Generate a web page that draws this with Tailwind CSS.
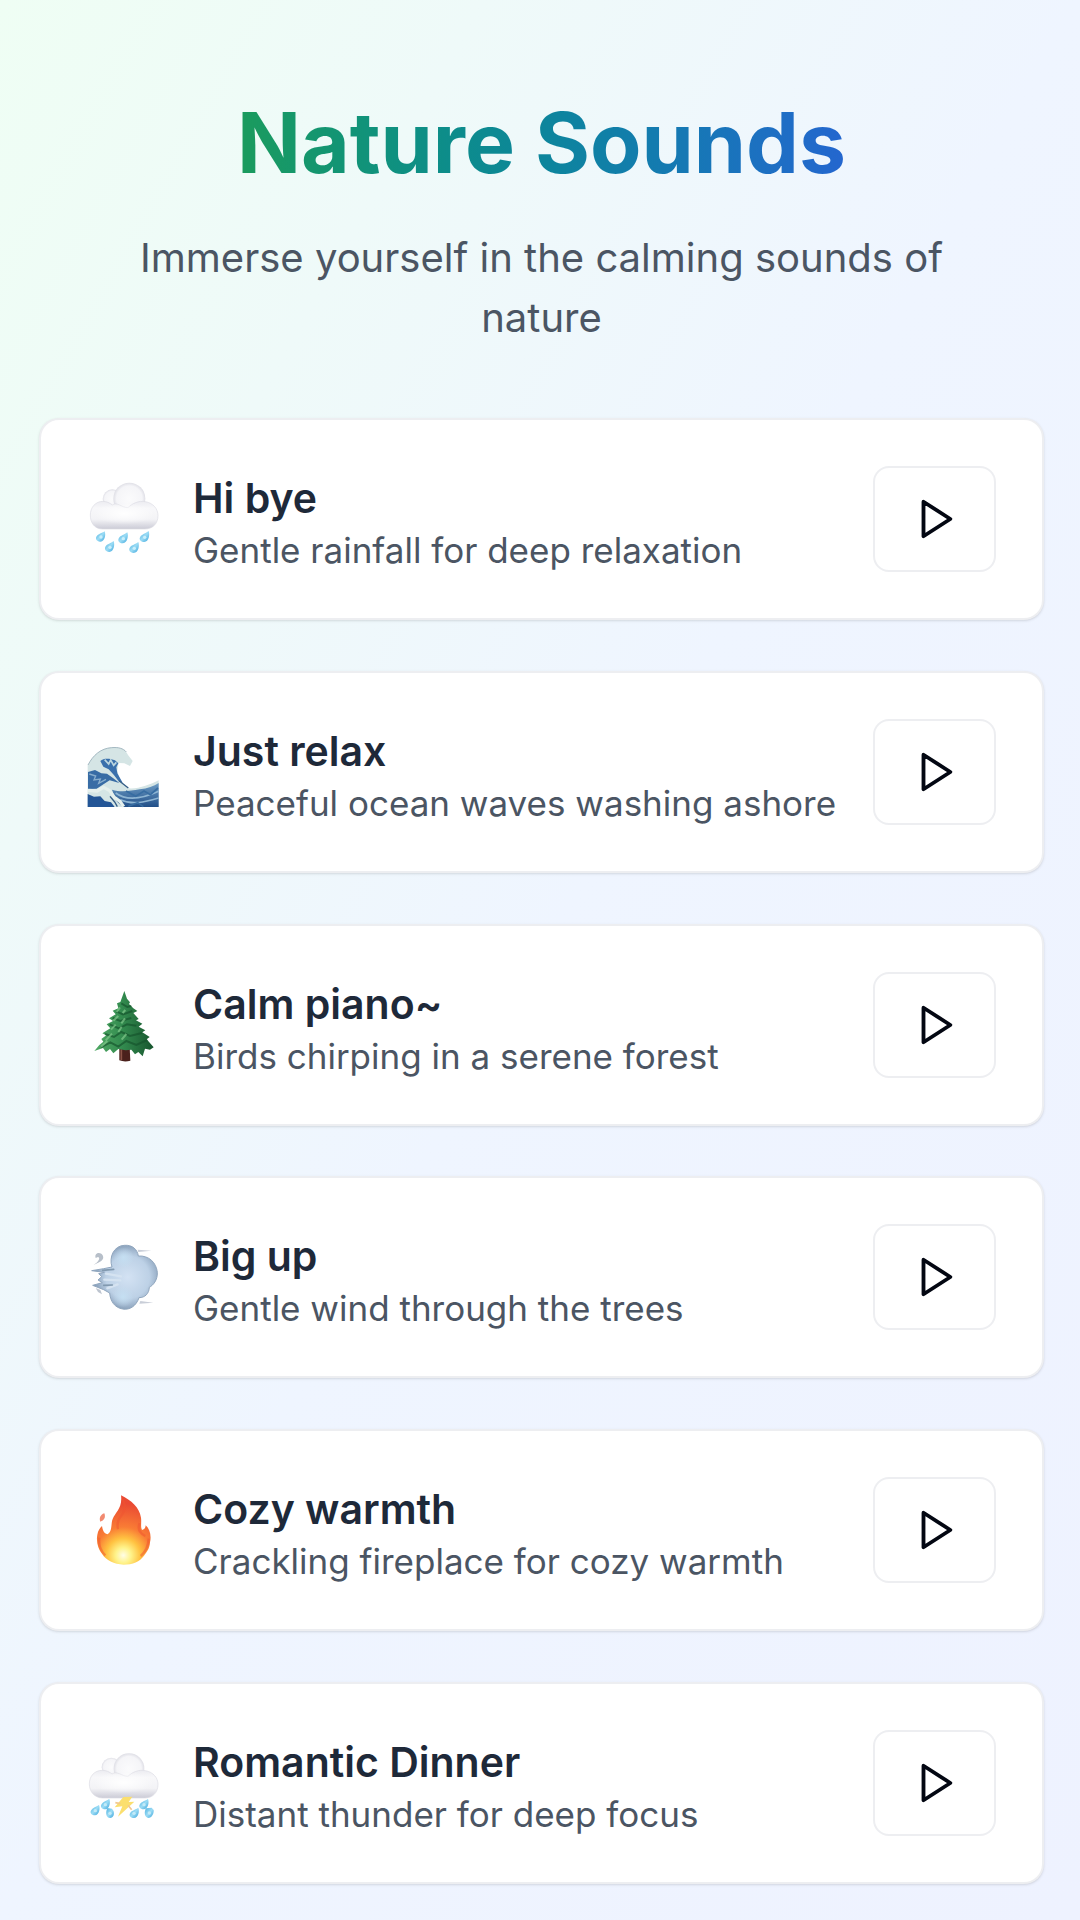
<!DOCTYPE html>
<html lang="en">

<head>
    <meta charset="UTF-8">
    <meta name="viewport" content="width=device-width, initial-scale=1.0">
    <title>Nature Sounds</title>
    <script src="https://cdn.jsdelivr.net/npm/@tailwindcss/browser@4"></script>
</head>

<body class="font-['Inter',sans-serif]">
    <svg class="hidden" aria-hidden="true">
        <defs>
            <symbol id="play" viewBox="0 0 24 24">
                <polygon points="6 3 20 12 6 21 6 3" fill="none" stroke="currentColor" stroke-width="2" stroke-linecap="round" stroke-linejoin="round" />
            </symbol>
        </defs>
    </svg>

    <main class="min-h-screen flex flex-col pl-[39px] pr-9 pt-[93px] pb-9 bg-linear-to-br from-[#effef4] via-[#eff5ff] to-[#eef2ff]">
        <header class="text-center mb-[70px]">
            <h1 class="text-[84px] leading-[100px] font-bold mb-[35px]"><span class="bg-linear-to-r from-[#1b9b5c] to-[#2466cf] bg-clip-text text-transparent">Nature Sounds</span></h1>
            <p class="text-[40px] leading-[60px] text-[#4b5563] px-[60px]">Immerse yourself in the calming sounds of nature</p>
        </header>

        <ul class="flex-1 flex flex-col justify-between gap-12">
            <li class="flex items-center h-[202px] px-[46px] bg-white border-2 border-gray-200/70 rounded-[20px] shadow-sm">
                <svg class="size-[72px] shrink-0 overflow-visible" viewBox="51 73 216 216" aria-hidden="true">
                    <defs>
                        <linearGradient id="cloud" x1="0" y1="0" x2="0" y2="1">
                            <stop offset="0" stop-color="#ececf1" />
                            <stop offset=".25" stop-color="#f8f8fa" />
                            <stop offset=".65" stop-color="#f3f3f6" />
                            <stop offset="1" stop-color="#cbcbd6" />
                        </linearGradient>
                        <radialGradient id="puff">
                            <stop offset="0" stop-color="#fbfbfc" />
                            <stop offset=".8" stop-color="#f5f5f8" />
                            <stop offset="1" stop-color="#dfdfe6" />
                        </radialGradient>
                        <radialGradient id="shine">
                            <stop offset="0" stop-color="#fff" />
                            <stop offset="1" stop-color="#fff" stop-opacity="0" />
                        </radialGradient>
                        <linearGradient id="drop" x1="0" y1="0" x2="1" y2="1">
                            <stop offset="0" stop-color="#4fb0df" />
                            <stop offset=".5" stop-color="#9bdcf5" />
                            <stop offset="1" stop-color="#3fa6dc" />
                        </linearGradient>
                    </defs>
                    <circle cx="127" cy="121" r="29" fill="url(#puff)" />
                    <circle cx="178" cy="120" r="48" fill="url(#puff)" />
                    <path d="M98 211C73 211 61 192 61 169C61 147 76 128 99 128C109 128 120 133 127 139C141 128 157 148 174 147C187 134 207 125 226 129C250 133 264 151 264 171C264 194 249 211 224 211Z" fill="url(#cloud)" stroke="#dcdce4" stroke-width="2" />
                    <ellipse cx="163" cy="165" rx="90" ry="32" fill="url(#shine)" />
                    <g fill="url(#drop)">
                        <path d="M104 218C108 228 105 248 92 249C80 250 75 240 80 233C84 226 96 224 104 218Z" />
                        <path d="M172 221C176 231 173 253 159 254C147 255 142 245 147 238C151 231 164 228 172 221Z" />
                        <path d="M236 217C240 228 237 249 223 250C211 250 206 241 211 234C215 227 228 224 236 217Z" />
                        <path d="M131 247C135 258 132 279 118 280C106 280 102 270 107 263C111 256 123 254 131 247Z" />
                        <path d="M205 250C209 261 206 282 191 283C179 283 175 273 180 266C184 259 197 257 205 250Z" />
                    </g>
                    <g fill="#c9effb">
                        <circle cx="93" cy="235" r="5" />
                        <circle cx="160" cy="240" r="5" />
                        <circle cx="224" cy="236" r="5" />
                        <circle cx="120" cy="266" r="5" />
                        <circle cx="193" cy="269" r="5" />
                    </g>
                </svg>
                <div class="flex-1 ml-[34px] pt-2">
                    <h2 class="text-[41px] leading-[54px] font-semibold text-gray-800">Hi bye</h2>
                    <p class="text-[35px] leading-[50px] text-[#4b5563] whitespace-nowrap">Gentle rainfall for deep relaxation</p>
                </div>
                <button type="button" aria-label="Play Hi bye" class="w-[123px] h-[106px] shrink-0 flex items-center justify-center border-2 border-gray-200/70 rounded-2xl text-gray-950">
                    <svg class="size-[46px]"><use href="#play" /></svg>
                </button>
            </li>

            <li class="flex items-center h-[202px] px-[46px] bg-white border-2 border-gray-200/70 rounded-[20px] shadow-sm">
                <svg class="size-[72px] shrink-0 overflow-visible" viewBox="51 51 216 216" aria-hidden="true">
                    <defs>
                        <linearGradient id="sea" x1="0" y1="0" x2="0" y2="1">
                            <stop offset="0" stop-color="#6d9cc4" />
                            <stop offset="1" stop-color="#214f88" />
                        </linearGradient>
                    </defs>
                    <path d="M53 264V139C68 111 91 88 125 85C149 83 165 89 174 108L188 126L180 141L163 133L146 132L142 154L149 182L174 208C206 211 239 197 266 184V264Z" fill="#d5e5e5" />
                    <path d="M54 138C69 109 92 88 125 86C144 84 160 88 169 99" fill="none" stroke="#a5b9c2" stroke-width="3" />
                    <path d="M91 126C102 116 121 119 135 124L145 133L139 145L142 163L158 191L146 187L131 167L116 151L100 143Z" fill="#3a70ac" />
                    <path d="M104 122L116 135L122 123L131 139L139 130" fill="none" stroke="#bcd6df" stroke-width="5" />
                    <path d="M54 159L75 153L94 163L111 164L130 178L148 192L119 184L97 198L80 209L54 210Z" fill="#386ca5" />
                    <path d="M58 165L77 171L72 183L91 180L86 193L108 181" fill="none" stroke="#89aecd" stroke-width="4" />
                    <path d="M126 212C155 221 181 215 209 211C233 208 251 202 266 192V264H158L137 244Z" fill="url(#sea)" />
                    <path d="M53 225L72 233L91 232L104 246L123 250L134 264H53Z" fill="#235596" />
                    <path d="M137 222C170 247 213 241 266 217M151 242C187 259 224 249 266 237" fill="none" stroke="#8eb5d3" stroke-width="5" />
                    <path d="M168 216L197 232L222 216L241 227L264 207M175 262L203 251L220 263" fill="none" stroke="#376da2" stroke-width="5" />
                    <path d="M54 214L81 216L101 205L119 215L133 235L150 247L161 263" fill="none" stroke="#e6f0ed" stroke-width="10" />
                    <path d="M120 232L134 249L142 263M147 185L175 207" fill="none" stroke="#355d85" stroke-width="4" />
                </svg>
                <div class="flex-1 ml-[34px] pt-2">
                    <h2 class="text-[41px] leading-[54px] font-semibold text-gray-800">Just relax</h2>
                    <p class="text-[35px] leading-[50px] text-[#4b5563] whitespace-nowrap">Peaceful ocean waves washing ashore</p>
                </div>
                <button type="button" aria-label="Play Just relax" class="w-[123px] h-[106px] shrink-0 flex items-center justify-center border-2 border-gray-200/70 rounded-2xl text-gray-950">
                    <svg class="size-[46px]"><use href="#play" /></svg>
                </button>
            </li>

            <li class="flex items-center h-[202px] px-[46px] bg-white border-2 border-gray-200/70 rounded-[20px] shadow-sm">
                <svg class="size-[72px] shrink-0 overflow-visible" viewBox="51 58 216 216" aria-hidden="true">
                    <defs>
                        <linearGradient id="pine" x1="0" y1="0" x2="1" y2="0">
                            <stop offset="0" stop-color="#51a965" />
                            <stop offset=".45" stop-color="#348d50" />
                            <stop offset="1" stop-color="#17552e" />
                        </linearGradient>
                    </defs>
                    <path d="M148 232H179L181 273Q164 278 148 272Z" fill="#4b211c" />
                    <path d="M154 239V271" stroke="#8c5447" stroke-width="5" />
                    <path d="M163 64L171 87L180 98L177 103L190 116L202 124L190 130L206 148L198 152L217 162L206 171L226 182L217 188L239 202L230 209L251 233L240 240L225 237L218 260L205 247L195 254L184 240L167 242L145 238L130 251L120 238L108 247L99 235L73 244L88 226L100 216L94 208L109 197L97 191L121 176L110 164L129 154L117 146L137 134L128 123L145 116L141 101L151 97Z" fill="url(#pine)" />
                    <path d="M154 101L172 112L184 109M139 125L159 134L187 124M128 145L151 154L184 145M119 164L147 176L171 164L199 168M105 193L132 202L154 187L180 199L216 190M93 233L121 218L145 231L169 214L199 226L232 211" fill="none" stroke="#14522b" stroke-opacity=".65" stroke-width="6" />
                    <path d="M150 113L140 127M145 139L130 153M137 165L123 180M126 192L107 212M112 214L93 231M166 121L158 130M165 146L154 161M155 171L145 187M169 193L155 210" stroke="#82c98b" stroke-opacity=".7" stroke-width="6" />
                </svg>
                <div class="flex-1 ml-[34px] pt-2">
                    <h2 class="text-[41px] leading-[54px] font-semibold text-gray-800">Calm piano~</h2>
                    <p class="text-[35px] leading-[50px] text-[#4b5563] whitespace-nowrap">Birds chirping in a serene forest</p>
                </div>
                <button type="button" aria-label="Play Calm piano~" class="w-[123px] h-[106px] shrink-0 flex items-center justify-center border-2 border-gray-200/70 rounded-2xl text-gray-950">
                    <svg class="size-[46px]"><use href="#play" /></svg>
                </button>
            </li>

            <li class="flex items-center h-[202px] px-[46px] bg-white border-2 border-gray-200/70 rounded-[20px] shadow-sm">
                <svg class="size-[72px] shrink-0 overflow-visible" viewBox="51 51 216 216" aria-hidden="true">
                    <defs>
                        <radialGradient id="wind" cx=".55" cy=".5" r=".55">
                            <stop offset="0" stop-color="#d3e2f3" />
                            <stop offset=".6" stop-color="#bdd1e6" />
                            <stop offset="1" stop-color="#7e96b1" />
                        </radialGradient>
                        <radialGradient id="gust">
                            <stop offset="0" stop-color="#c5dff2" />
                            <stop offset="1" stop-color="#c5dff2" stop-opacity="0" />
                        </radialGradient>
                    </defs>
                    <path d="M65 140L101 134L126 129C116 99 132 65 163 64C187 62 202 76 205 96C237 94 259 116 262 145C263 169 249 184 238 190C237 209 225 221 207 221C199 245 180 259 158 255C134 251 121 232 119 207L101 197L68 184L97 176L84 168L95 158L86 149L103 145Z" fill="url(#wind)" stroke="#90a6be" stroke-width="3" />
                    <circle cx="161" cy="101" r="31" fill="url(#gust)" />
                    <circle cx="159" cy="218" r="32" fill="url(#gust)" />
                    <path d="M108 149L153 157M103 167L151 169M112 193L143 181" stroke="#d5e3f1" stroke-width="7" stroke-linecap="round" />
                    <path d="M98 139L131 136M101 184L127 183" stroke="#8199af" stroke-width="5" stroke-linecap="round" />
                    <path d="M77 102C72 87 91 82 98 94C105 108 91 114 71 123C84 114 93 103 84 99Z" fill="#b7bfc9" />
                    <path d="M77 192L91 198L96 211L84 204Z" fill="#bdc4cf" />
                    <path d="M203 77L244 80L205 84ZM211 231L250 236L208 239Z" fill="#c9ced8" />
                </svg>
                <div class="flex-1 ml-[34px] pt-2">
                    <h2 class="text-[41px] leading-[54px] font-semibold text-gray-800">Big up</h2>
                    <p class="text-[35px] leading-[50px] text-[#4b5563] whitespace-nowrap">Gentle wind through the trees</p>
                </div>
                <button type="button" aria-label="Play Big up" class="w-[123px] h-[106px] shrink-0 flex items-center justify-center border-2 border-gray-200/70 rounded-2xl text-gray-950">
                    <svg class="size-[46px]"><use href="#play" /></svg>
                </button>
            </li>

            <li class="flex items-center h-[202px] px-[46px] bg-white border-2 border-gray-200/70 rounded-[20px] shadow-sm">
                <svg class="size-[72px] shrink-0 overflow-visible" viewBox="51 59 216 216" aria-hidden="true">
                    <defs>
                        <radialGradient id="fire" gradientUnits="userSpaceOnUse" cx="160" cy="243" r="155">
                            <stop offset="0" stop-color="#fffde6" />
                            <stop offset=".15" stop-color="#fff38a" />
                            <stop offset=".33" stop-color="#ffc241" />
                            <stop offset=".55" stop-color="#f97c35" />
                            <stop offset="1" stop-color="#ea4a33" />
                        </radialGradient>
                    </defs>
                    <path d="M153 63C184 78 208 99 213 130C215 145 211 158 216 167C224 166 227 159 227 153C239 164 245 183 240 204C239 222 231 233 222 244C209 262 188 271 161 271C132 270 108 258 97 240C84 224 78 202 82 181C84 169 90 160 96 155C98 168 102 177 112 180C128 172 122 149 128 134C136 113 158 101 153 63Z" fill="url(#fire)" />
                    <path d="M158 75C171 97 163 114 151 128C140 141 142 155 144 165M209 147C200 166 214 180 226 185M88 190C85 213 94 232 106 243M236 193C235 217 225 234 212 245" fill="none" stroke="#f0532f" stroke-opacity=".5" stroke-width="7" />
                    <path d="M103 117C108 129 102 139 91 142C87 133 90 121 103 117Z" fill="#f28a70" />
                </svg>
                <div class="flex-1 ml-[34px] pt-2">
                    <h2 class="text-[41px] leading-[54px] font-semibold text-gray-800">Cozy warmth</h2>
                    <p class="text-[35px] leading-[50px] text-[#4b5563] whitespace-nowrap">Crackling fireplace for cozy warmth</p>
                </div>
                <button type="button" aria-label="Play Cozy warmth" class="w-[123px] h-[106px] shrink-0 flex items-center justify-center border-2 border-gray-200/70 rounded-2xl text-gray-950">
                    <svg class="size-[46px]"><use href="#play" /></svg>
                </button>
            </li>

            <li class="flex items-center h-[202px] px-[46px] bg-white border-2 border-gray-200/70 rounded-[20px] shadow-sm">
                <svg class="size-[72px] shrink-0 overflow-visible" viewBox="51 51 216 216" aria-hidden="true">
                    <circle cx="124" cy="112" r="29" fill="url(#puff)" />
                    <circle cx="177" cy="116" r="46" fill="url(#puff)" />
                    <path d="M98 204C73 204 58 184 58 162C58 139 73 121 97 121C109 121 119 126 126 132C141 121 158 140 174 139C187 126 207 118 226 122C250 126 264 144 264 163C264 187 249 204 224 204Z" fill="url(#cloud)" stroke="#dcdce4" stroke-width="2" />
                    <ellipse cx="161" cy="158" rx="90" ry="32" fill="url(#shine)" />
                    <g fill="url(#drop)">
                        <path d="M87 225C91 235 88 255 75 256C63 256 59 247 64 240C68 233 79 231 87 225Z" />
                        <path d="M118 207C122 217 119 237 106 238C94 238 90 229 95 222C99 215 110 213 118 207Z" />
                        <path d="M112 234L126 236C136 247 132 261 122 264C109 265 105 250 112 234Z" />
                        <path d="M205 233C209 243 206 263 192 264C180 264 176 255 181 248C185 241 197 239 205 233Z" />
                        <path d="M234 207C238 217 235 237 221 238C209 238 205 229 210 222C214 215 226 213 234 207Z" />
                        <path d="M228 235L245 233L251 240C252 252 245 263 235 264C224 263 221 247 228 235Z" />
                    </g>
                    <g fill="#c2eaf8">
                        <circle cx="76" cy="242" r="5" />
                        <circle cx="106" cy="224" r="5" />
                        <circle cx="120" cy="250" r="5" />
                        <circle cx="192" cy="250" r="5" />
                        <circle cx="222" cy="224" r="5" />
                        <circle cx="238" cy="249" r="5" />
                    </g>
                    <path d="M160 201L187 200L176 216L193 215L144 260L157 229L134 232Z" fill="#fbdf6e" />
                    <path d="M136 218L151 221M174 226L185 239" stroke="#f1c890" stroke-width="5" />
                </svg>
                <div class="flex-1 ml-[34px] pt-2">
                    <h2 class="text-[41px] leading-[54px] font-semibold text-gray-800">Romantic Dinner</h2>
                    <p class="text-[35px] leading-[50px] text-[#4b5563] whitespace-nowrap">Distant thunder for deep focus</p>
                </div>
                <button type="button" aria-label="Play Romantic Dinner" class="w-[123px] h-[106px] shrink-0 flex items-center justify-center border-2 border-gray-200/70 rounded-2xl text-gray-950">
                    <svg class="size-[46px]"><use href="#play" /></svg>
                </button>
            </li>
        </ul>
    </main>
</body>

</html>
